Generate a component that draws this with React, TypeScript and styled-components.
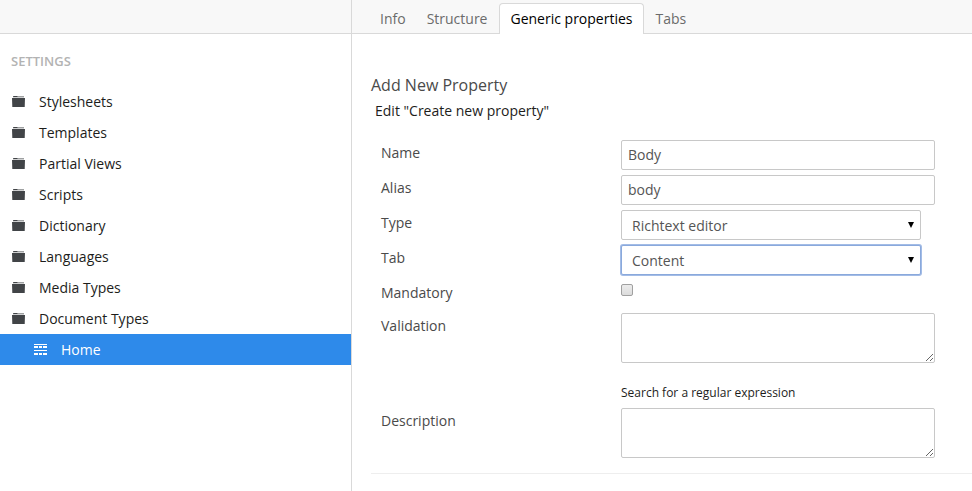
import React from "react";
import styled, { createGlobalStyle, css } from "styled-components";

const GlobalStyle = createGlobalStyle`
  *, *::before, *::after { box-sizing: border-box; }
  body {
    margin: 0;
    background: #fff;
    color: #1d1d1b;
    font: 14px/20px "Open Sans", "Noto Sans", sans-serif;
  }
`;

const Page = styled.div`
  display: flex;
  min-height: 100vh;
`;

const Sidebar = styled.aside`
  flex: 0 0 352px;
  border-right: 1px solid #d9d9d9;
`;

const SidebarTop = styled.div`
  height: 34px;
  background: #f8f8f8;
  border-bottom: 1px solid #d9d9d9;
`;

const SectionTitle = styled.h2`
  margin: 17px 11px 15px;
  font-size: 13px;
  line-height: 20px;
  font-weight: 600;
  color: #b3b3b3;
  text-transform: uppercase;
`;

const Tree = styled.ul`
  margin: 0;
  padding: 0;
  list-style: none;
`;

const TreeLink = styled.a<{ $child?: boolean }>`
  display: flex;
  align-items: center;
  gap: 14px;
  height: 31px;
  padding-left: ${(p) => (p.$child ? 34 : 12)}px;
  background: ${(p) => (p.$child ? "#2e8aea" : "transparent")};
  color: ${(p) => (p.$child ? "#fff" : "#1d1d1b")};
  text-decoration: none;
`;

const Main = styled.main`
  flex: 1;
  min-width: 0;
`;

const TabBar = styled.nav`
  display: flex;
  align-items: flex-end;
  gap: 3px;
  height: 34px;
  padding-left: 19px;
  background: #f8f8f8;
  box-shadow: inset 0 -1px #d9d9d9;
`;

const Tab = styled.a<{ $active?: boolean }>`
  height: 31px;
  padding: 5px 8px;
  border: 1px solid transparent;
  border-bottom: 0;
  border-radius: 4px 4px 0 0;
  color: #6b6b6b;
  text-decoration: none;
  ${(p) =>
    p.$active &&
    css`
      padding: 5px 10px;
      background: #fff;
      border-color: #d9d9d9;
      color: #000;
    `}
`;

const Form = styled.form`
  padding: 41px 0 0 19px;
`;

const Heading = styled.h1`
  margin: 0;
  font-size: 16px;
  line-height: 20px;
  font-weight: 400;
  color: #4a4a4a;
`;

const SubHeading = styled.p`
  margin: 6px 4px 19px;
`;

const Fields = styled.div`
  display: flex;
  flex-direction: column;
  gap: 5px;
  padding: 0 10px 15px;
  border-bottom: 1px solid #eee;
`;

const Row = styled.div`
  display: grid;
  grid-template-columns: 240px minmax(0, 314px);
  min-height: 28px;
`;

const Label = styled.label`
  padding-top: 3px;
  color: #4a4a4a;
`;

const control = css`
  display: block;
  margin: 0;
  border: 1px solid #c8c8c8;
  border-radius: 2px;
  background: #fff;
  color: #555;
  font: inherit;
`;

const TextInput = styled.input`
  ${control}
  width: 100%;
  height: 30px;
  padding: 3px 6px 5px;
`;

const TextArea = styled.textarea`
  ${control}
  width: 100%;
  height: 50px;
  padding: 4px 6px;
  resize: vertical;
`;

const SelectBox = styled.div`
  position: relative;
  width: 300px;
  max-width: 100%;

  svg {
    position: absolute;
    top: 11px;
    right: 6px;
    pointer-events: none;
  }
`;

const Select = styled.select<{ $highlighted?: boolean }>`
  ${control}
  width: 100%;
  height: 30px;
  padding: 5px 20px 3px 10px;
  appearance: none;
  outline: none;
  ${(p) =>
    p.$highlighted &&
    css`
      border-color: #8aa9dc;
      box-shadow: 0 0 0 1px #a3bce6;
    `}
`;

const Checkbox = styled.input`
  appearance: none;
  width: 12px;
  height: 12px;
  margin: 4px 0 0;
  border: 1px solid #a0a0a0;
  border-radius: 2px;
  background: linear-gradient(#ececec, #dcdcdc);

  &:checked {
    background: #2e8aea;
  }
`;

const HelpLink = styled.a`
  display: block;
  margin-top: 20px;
  font-size: 12px;
  line-height: 20px;
  color: #1d1d1b;
  text-decoration: none;
`;

const FolderIcon = () => (
  <svg width="13" height="11" viewBox="0 0 13 11" fill="#414447" aria-hidden="true">
    <path d="M1 1.200V.6L1.600 0H5l.8.4H12v.8z" />
    <path d="M0 2h13L12.700 11H.3z" />
  </svg>
);

const DocumentTypeIcon = () => (
  <svg width="13" height="11" viewBox="0 0 13 11" fill="#fff" aria-hidden="true">
    <path d="M0 0h13v1H0zM0 2h4v2H0zM5 2h3v2H5zM9 2h4v2H9zM0 6h13v1H0zM0 9h4v2H0zM5 9h3v2H5zM9 9h4v2H9z" />
  </svg>
);

const Arrow = () => (
  <svg width="8" height="8" viewBox="0 0 8 8" aria-hidden="true">
    <path d="M1 1h6L4 7z" fill="#000" />
  </svg>
);

const folders = [
  "Stylesheets",
  "Templates",
  "Partial Views",
  "Scripts",
  "Dictionary",
  "Languages",
  "Media Types",
  "Document Types",
];

const tabs = ["Info", "Structure", "Generic properties", "Tabs"];

export default function App() {
  return (
    <>
      <GlobalStyle />
      <Page>
        <Sidebar>
          <SidebarTop />
          <SectionTitle>Settings</SectionTitle>
          <Tree>
            {folders.map((name) => (
              <li key={name}>
                <TreeLink href="#">
                  <FolderIcon />
                  {name}
                </TreeLink>
              </li>
            ))}
            <li>
              <TreeLink href="#" $child aria-current="page">
                <DocumentTypeIcon />
                Home
              </TreeLink>
            </li>
          </Tree>
        </Sidebar>
        <Main>
          <TabBar>
            {tabs.map((name) => (
              <Tab key={name} href="#" $active={name === "Generic properties"}>
                {name}
              </Tab>
            ))}
          </TabBar>
          <Form>
            <Heading>Add New Property</Heading>
            <SubHeading>Edit "Create new property"</SubHeading>
            <Fields>
              <Row>
                <Label htmlFor="name">Name</Label>
                <TextInput id="name" type="text" defaultValue="Body" />
              </Row>
              <Row>
                <Label htmlFor="alias">Alias</Label>
                <TextInput id="alias" type="text" defaultValue="body" />
              </Row>
              <Row>
                <Label htmlFor="type">Type</Label>
                <SelectBox>
                  <Select id="type">
                    <option>Richtext editor</option>
                  </Select>
                  <Arrow />
                </SelectBox>
              </Row>
              <Row>
                <Label htmlFor="tab">Tab</Label>
                <SelectBox>
                  <Select id="tab" $highlighted>
                    <option>Content</option>
                  </Select>
                  <Arrow />
                </SelectBox>
              </Row>
              <Row>
                <Label htmlFor="mandatory">Mandatory</Label>
                <Checkbox id="mandatory" type="checkbox" />
              </Row>
              <Row>
                <Label htmlFor="validation">Validation</Label>
                <div>
                  <TextArea id="validation" />
                  <HelpLink href="#">Search for a regular expression</HelpLink>
                </div>
              </Row>
              <Row>
                <Label htmlFor="description">Description</Label>
                <TextArea id="description" />
              </Row>
            </Fields>
          </Form>
        </Main>
      </Page>
    </>
  );
}
